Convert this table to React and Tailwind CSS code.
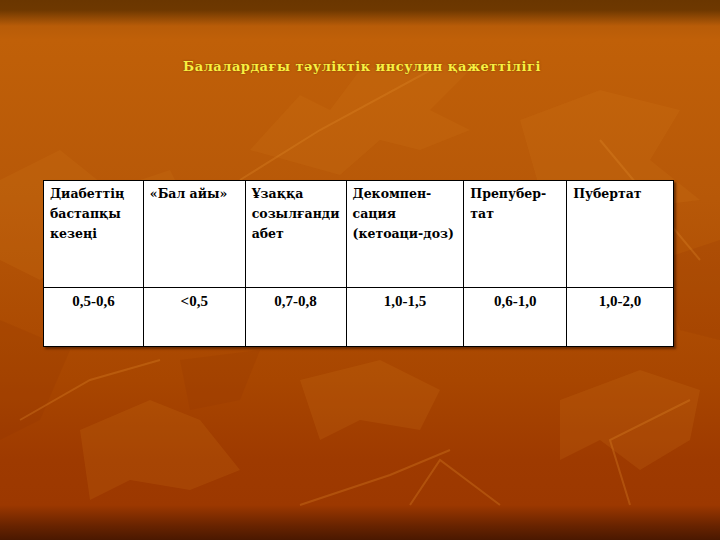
import React from 'react';

const headers = [
  ['Диабеттің', 'бастапқы', 'кезеңі'],
  ['«Бал айы»'],
  ['Ұзаққа', 'созылғанди', 'абет'],
  ['Декомпен-', 'сация', '(кетоаци-доз)'],
  ['Препубер-', 'тат'],
  ['Пубертат'],
];

const values = ['0,5-0,6', '<0,5', '0,7-0,8', '1,0-1,5', '0,6-1,0', '1,0-2,0'];

const widths = ['w-[100px]', 'w-[102px]', 'w-[101px]', 'w-[118px]', 'w-[103px]', 'w-[106px]'];

const Leaves = () => (
  <svg className="absolute inset-0 w-full h-full" viewBox="0 0 720 540" preserveAspectRatio="none">
    <g fill="#d27a1a" opacity="0.18">
      <path d="M250 150 L300 95 L330 110 L360 70 L420 60 L470 70 L430 110 L470 130 L420 150 L380 140 L340 175 Z" />
      <path d="M0 180 L60 150 L110 190 L170 170 L200 230 L140 260 L90 240 L40 280 L0 260 Z" />
      <path d="M520 120 L600 90 L680 110 L650 160 L700 200 L620 210 L580 180 L540 190 Z" />
      <path d="M80 430 L150 400 L200 420 L240 470 L190 490 L130 480 L90 500 Z" />
      <path d="M560 400 L640 370 L700 390 L690 440 L640 470 L600 440 L560 460 Z" />
      <path d="M300 380 L380 360 L440 390 L420 430 L360 420 L320 440 Z" />
    </g>
    <g fill="#8c3000" opacity="0.15">
      <path d="M0 320 L70 350 L40 420 L0 440 Z" />
      <path d="M660 260 L720 240 L720 340 L680 330 Z" />
      <path d="M180 360 L260 350 L240 400 L190 410 Z" />
    </g>
    <g stroke="#e08a2a" strokeWidth="2" fill="none" opacity="0.3">
      <path d="M240 180 L320 130 L440 65" />
      <path d="M300 505 L390 475 L450 450" />
      <path d="M410 505 L440 460 L500 505" />
      <path d="M630 505 L610 440 L690 400" />
      <path d="M20 420 L90 380 L160 360" />
      <path d="M600 140 L650 200 L700 260" />
    </g>
  </svg>
);

export default function App() {
  return (
    <div className="relative w-[720px] h-[540px] overflow-hidden bg-[linear-gradient(180deg,#6a3600_0px,#6e3800_10px,#b85c08_26px,#c06008_40px,#b75808_200px,#a84600_380px,#9e3a00_460px,#9c3800_505px,#6a2400_525px,#4a1800_540px)] font-[family-name:'Liberation_Serif',serif]">
      <Leaves />
      <div className="relative flex flex-col items-center pt-[57px]">
        <h1 className="font-[family-name:'DejaVu_Serif',serif] text-[13px] leading-[20px] tracking-[0.5px] font-bold text-[#f8f040] [text-shadow:0_0_2px_#7a3a00] pl-[4px]">
          Балалардағы тәуліктік инсулин қажеттілігі
        </h1>
      </div>
      <div className="relative ml-[43px] mt-[103px] w-[631px] border border-black bg-white shadow-[2px_2px_2px_rgba(60,20,0,0.6)]">
        <div className="flex h-[107px] border-b border-black">
          {headers.map((lines, i) => (
            <div
              key={i}
              className={`${widths[i]} ${i < 5 ? 'border-r border-black' : ''} font-[family-name:'DejaVu_Serif',serif] px-[6px] pt-[3px] text-[12.5px] leading-[20px] font-bold text-black`}
            >
              {lines.map((l, j) => (
                <div key={j} className="whitespace-nowrap">{l}</div>
              ))}
            </div>
          ))}
        </div>
        <div className="flex h-[58px]">
          {values.map((v, i) => (
            <div
              key={i}
              className={`${widths[i]} ${i < 5 ? 'border-r border-black' : ''} pt-[3px] text-center text-[15px] leading-[20px] font-bold text-black`}
            >
              {v}
            </div>
          ))}
        </div>
      </div>
    </div>
  );
}
